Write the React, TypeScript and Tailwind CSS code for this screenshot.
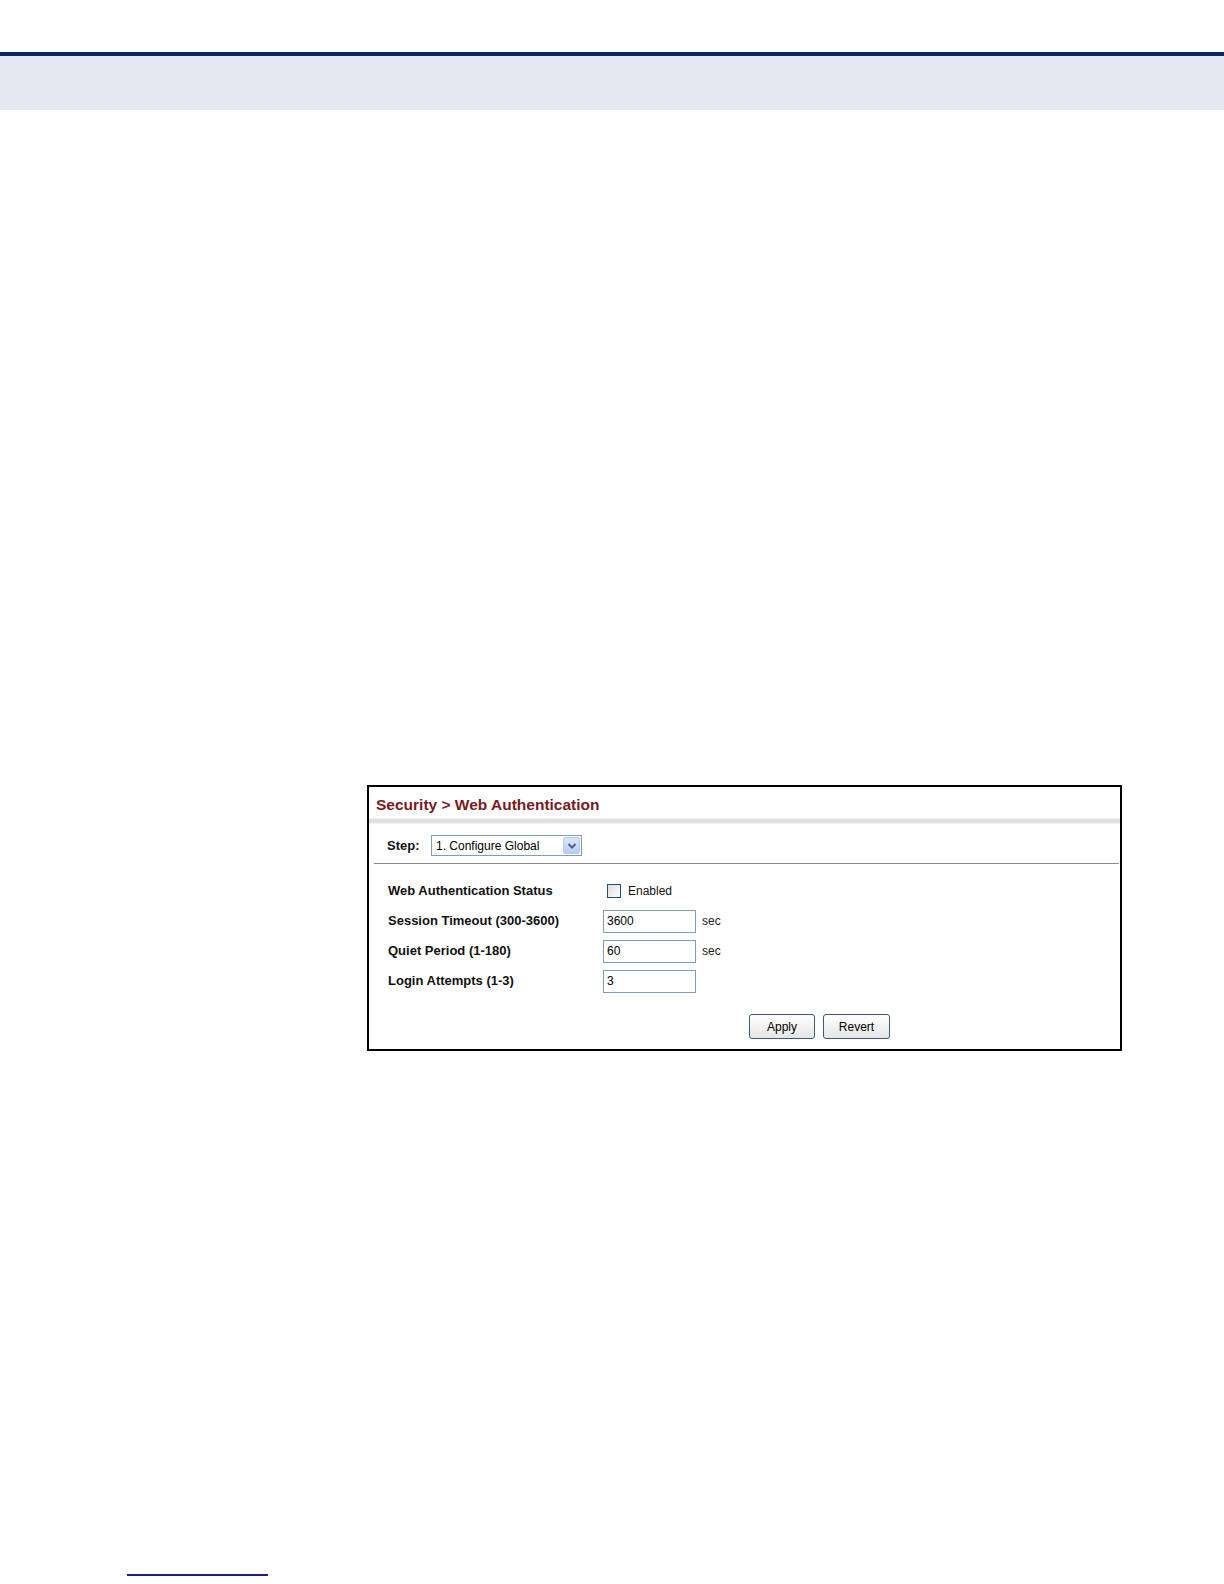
import type React from "react";

/* ── Small pieces ─────────────────────────────────────────────────────────── */
const TextBox = ({ value }: { value: string }) => (
  <div className="w-[93px] h-[23px] border border-[#7f9db9] bg-white flex items-center px-[3px] text-[12px] text-black">
    {value}
  </div>
);

const FormRow = ({ label, children }: { label: string; children: React.ReactNode }) => (
  <div className="h-[30px] flex items-center">
    <div className="w-[215px] text-[13px] font-bold text-[#111]">{label}</div>
    {children}
  </div>
);

const Button = ({ label, width }: { label: string; width: string }) => (
  <div
    className={`${width} h-[25px] rounded-[3px] border border-[#3d5a7a] bg-gradient-to-b from-white to-[#e6e6e6] flex items-center justify-center text-[12px] text-black`}
  >
    {label}
  </div>
);

/* ═══════════════════════════════════════════════════════════════════════════ */
export default function App() {
  return (
    <div className="w-[1224px] h-[1584px] bg-white flex flex-col font-['Liberation_Sans',Arial,sans-serif]">
      {/* ═════════ PAGE HEADER BAND ═════════ */}
      <div className="h-[52px]" />
      <div className="h-[4px] bg-[#062a5f]" />
      <div className="h-[54px] bg-[#e5e8f0]" />

      {/* ═════════ SCREEN CAPTURE ═════════ */}
      <div className="flex-1 flex flex-col">
        <div className="ml-[367px] mt-[675px] w-[755px] h-[266px] border-2 border-black flex flex-col">
          <div className="pt-[9px] pl-[7px] h-[27px] text-[15.5px] leading-[18px] font-bold text-[#7b1a1f]">
            Security &gt; Web Authentication
          </div>
          <div className="mt-[4px] h-[6px] bg-gradient-to-b from-[#f2f2f2] via-[#d9d9d9] to-[#f5f5f5]" />

          {/* Step selector */}
          <div className="mt-[11px] h-[21px] pl-[18px] flex items-center">
            <span className="w-[44px] text-[13px] font-bold text-[#111]">Step:</span>
            <div className="w-[151px] h-[21px] border border-[#7f9db9] bg-white flex items-center justify-between">
              <span className="pl-[4px] text-[12px] text-black">1. Configure Global</span>
              <div className="w-[17px] h-[17px] mr-[1px] rounded-[2px] bg-gradient-to-b from-[#dbe6fd] to-[#b7cbf5] border border-[#b9cbef] flex items-center justify-center">
                <svg width="10" height="8" viewBox="0 0 10 8">
                  <path d="M1.5 2 L5 5.5 L8.5 2" fill="none" stroke="#4d6185" strokeWidth="2" />
                </svg>
              </div>
            </div>
          </div>
          <div className="mt-[7px] ml-[5px] mr-[1px] h-px bg-[#8c8c8c]" />

          {/* Settings */}
          <div className="pt-[12px] pl-[19px] flex flex-col">
            <FormRow label="Web Authentication Status">
              <div className="ml-[4px] flex items-center">
                <div className="w-[14px] h-[14px] border border-[#1c5180] bg-gradient-to-br from-[#dcdcdc] to-white" />
                <span className="ml-[7px] text-[12px] text-[#111]">Enabled</span>
              </div>
            </FormRow>
            <FormRow label="Session Timeout (300-3600)">
              <TextBox value="3600" />
              <span className="ml-[6px] text-[12px] text-[#222]">sec</span>
            </FormRow>
            <FormRow label="Quiet Period (1-180)">
              <TextBox value="60" />
              <span className="ml-[6px] text-[12px] text-[#222]">sec</span>
            </FormRow>
            <FormRow label="Login Attempts (1-3)">
              <TextBox value="3" />
            </FormRow>
          </div>

          {/* Actions */}
          <div className="mt-[18px] ml-[380px] flex gap-[8px]">
            <Button label="Apply" width="w-[66px]" />
            <Button label="Revert" width="w-[67px]" />
          </div>
        </div>

        <div className="mt-auto mb-[8px] ml-[127px] w-[141px] h-[2px] bg-[#1c1c8c]" />
      </div>
    </div>
  );
}
